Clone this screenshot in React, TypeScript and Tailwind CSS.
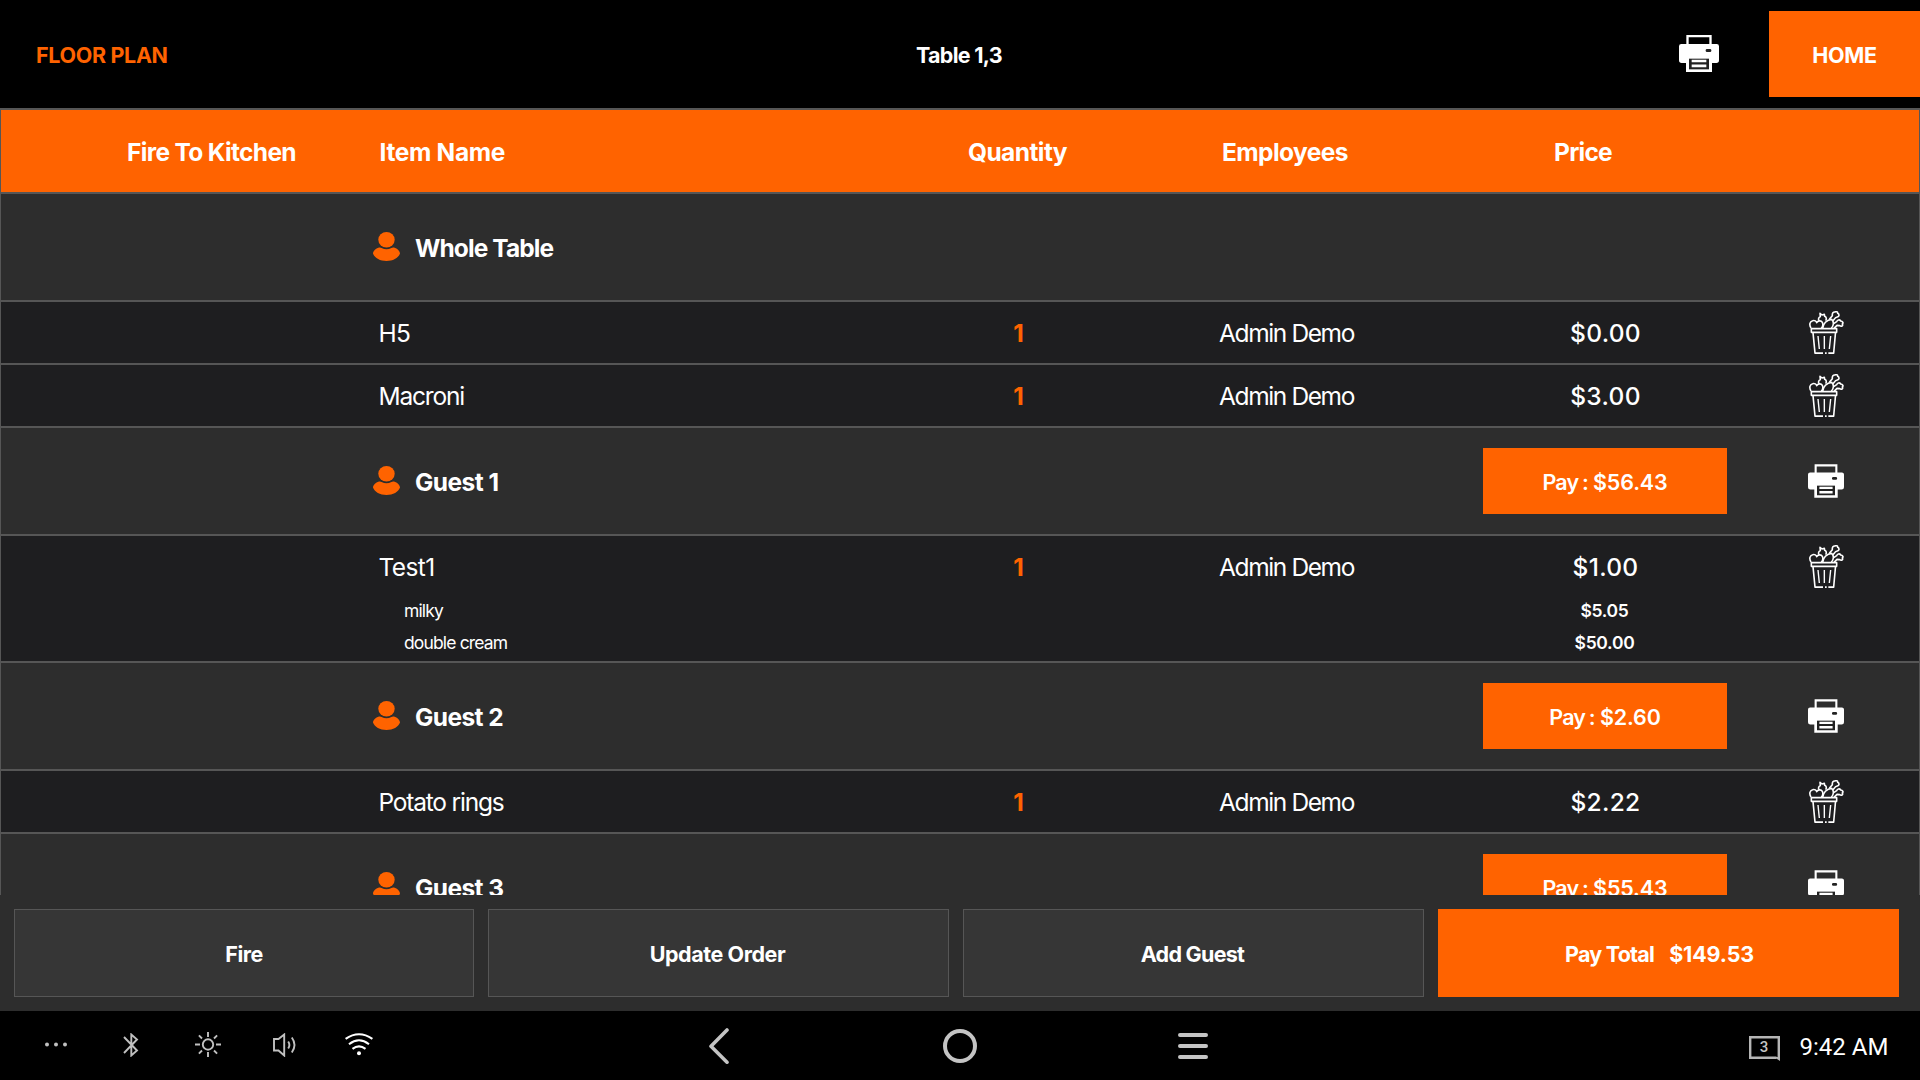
import type { ReactNode } from "react";

function Printer({ className }: { className: string }) {
  return (
    <svg viewBox="0 0 120 111" className={className} fill="none">
      <path d="M25.500 30V3.500H94.500V30" stroke="#fff" strokeWidth="7" />
      <path d="M7 27H113Q120 27 120 34V76Q120 84 112 84H99V111H21V84H8Q0 84 0 76V34Q0 27 7 27Z" fill="#fff" />
      <path d="M30 71H90V103H30Z" fill="#222" />
      <path d="M38 74.500H82V82H38ZM38 88.500H82V97H38Z" fill="#fff" />
      <rect x="80" y="42" width="17" height="9" rx="4" fill="#222" />
    </svg>
  );
}

function FoodBin() {
  return (
    <svg viewBox="0 0 105 129" className="h-[43px] w-[35px]" fill="none" stroke="#fff" strokeWidth="4.800" strokeLinejoin="round">
      <path d="M7 53H83V64H7Z" />
      <path d="M12 65L18 126.500H42M58 126.500H74L79.500 65M48 126.500H53" />
      <path d="M27 75L31 114M46 75V114M65 75L61 114" strokeWidth="4.200" />
      <path d="M6 51C0 42 2 31 11 29C17 27 22 31 23 35C26 29 36 27 40 34C43 40 41 47 37 52" />
      <path d="M30 29C27 24 29 18 34 17L33 7L39 12L46 10L47 16C53 19 53 24 50 29" />
      <path d="M41 52C42 38 53 26 68 25C76 32 74 44 67 52" />
      <path d="M61 25L70 14C69 7 73 2 78 3C81 0 87 3 86 7C92 10 91 17 85 18C81 19 79 20 77 23L72 29" />
      <path d="M74 38L83 32C85 26 92 25 95 30C101 31 104 36 100 39C103 44 97 48 92 44L84 43L75 52" />
    </svg>
  );
}

function Person() {
  return (
    <svg viewBox="0 0 27 29" className="mb-[2px] h-[29px] w-[27px] shrink-0" fill="#ff6300">
      <ellipse cx="13.500" cy="7.700" rx="8.200" ry="7.700" />
      <path d="M6 15.500Q7.500 15.200 8.600 15.900Q13.500 18.600 18.400 15.900Q19.500 15.200 21 15.500C24.500 16.300 27 19.500 27 21.500C25.500 26 20 29 13.500 29S1.500 26 0 21.500C0 19.500 2.500 16.300 6 15.500Z" />
    </svg>
  );
}

function Row({ group, tall, cells }: { group?: boolean; tall?: boolean; cells: ReactNode[] }) {
  const tone = group ? "h-[108px] items-center bg-[#2d2d2d]" : tall ? "h-[127px] items-start bg-[#1e1e20]" : "h-[63px] items-start bg-[#1e1e20]";
  return (
    <div className={`flex shrink-0 border-b-2 border-[#565656] ${tone}`}>
      <div className="w-[369px]" />
      <div className="w-[530px]">{cells[0]}</div>
      <div className="flex w-[236px] justify-center">{cells[1]}</div>
      <div className="flex w-[302px] justify-center">{cells[2]}</div>
      <div className="flex w-[334px] justify-center">{cells[3]}</div>
      <div className="flex w-[147px] justify-center pr-[39px]">{cells[4]}</div>
    </div>
  );
}

function Guest({ name, pay }: { name: ReactNode; pay?: string }) {
  return (
    <Row
      group
      cells={[
        <div className="flex items-center pl-[3px]">
          <Person />
          <span className="ml-[15px] pt-[2px] text-[24.500px] leading-[30px] font-bold">{name}</span>
        </div>,
        null,
        null,
        pay && (
          <button className="h-[66px] w-[244px] bg-[#ff6300] pt-[2px] text-[21.500px] font-semibold">
            <span className="mr-[3px] tracking-[-0.800px] [word-spacing:-1px]">Pay :</span>
            <span className="ml-[2px] tracking-[-0.150px]">{pay}</span>
          </button>
        ),
        pay && <Printer className="h-[34px] w-[36px]" />,
      ]}
    />
  );
}

function Item({ name, price, extras }: { name: ReactNode; price: string; extras?: [string, string][] }) {
  const line = "flex h-[61px] items-center pt-[2px] text-[24.500px]";
  return (
    <Row
      tall={!!extras}
      cells={[
        <div>
          <div className={`${line} pl-[8.500px]`}>{name}</div>
          {extras && (
            <div className="-mt-[2px] pl-[34px] text-[17.500px] leading-[32px] tracking-[-0.850px]">
              {extras.map(([n]) => (
                <div key={n}>{n}</div>
              ))}
            </div>
          )}
        </div>,
        <div className={`${line} pl-[1px] font-bold text-[#ff6300]`}>1</div>,
        <div className={`${line} pr-[1px] tracking-[-1.380px]`}>Admin Demo</div>,
        <div className="flex flex-col items-center">
          <div className={`${line} pl-[1px] font-medium tracking-[0.300px]`}>{price}</div>
          {extras && (
            <div className="-mt-[2px] pr-[1px] text-center text-[17.500px] leading-[32px] font-semibold tracking-[-0.300px]">
              {extras.map(([n, p]) => (
                <div key={n}>{p}</div>
              ))}
            </div>
          )}
        </div>,
        <div className="flex h-[61px] items-center">
          <FoodBin />
        </div>,
      ]}
    />
  );
}

function NavBar() {
  return (
    <nav className="flex h-[69px] shrink-0 items-center bg-black pl-[45px]">
      <svg className="mb-[1px] h-[24px] w-[22px]" viewBox="0 0 22 24" fill="#c0c0c0">
        <circle cx="2" cy="11.500" r="2" />
        <circle cx="11" cy="11.500" r="2" />
        <circle cx="20" cy="11.500" r="2" />
      </svg>
      <svg className="mb-[1px] ml-[56px] h-[24px] w-[16px]" viewBox="0 0 16 24" fill="none" stroke="#c0c0c0" strokeWidth="1.900">
        <path d="M1 4L14 17.500L8.300 22.500V1.500L14 6.500L1 20" />
      </svg>
      <svg className="mb-[1px] ml-[56px] h-[26px] w-[26px]" viewBox="0 0 26 26" fill="none" stroke="#c0c0c0" strokeWidth="1.900">
        <circle cx="13" cy="12.500" r="5.200" />
        <path d="M13 0V5M13 20V25M0 12.500H5M21 12.500H26M3.900 3.400L7 6.500M19 18.500L22.100 21.600M3.900 21.600L7 18.500M19 6.500L22.100 3.400" />
      </svg>
      <svg className="mb-[1px] ml-[52px] h-[24px] w-[24px]" viewBox="0 0 24 24" fill="none" stroke="#c0c0c0" strokeWidth="1.900">
        <path d="M1 6H5.500L11.200 1.500V22.500L5.500 17.500H1Z" />
        <path d="M15.200 8.500Q17.600 12 15.200 15.500M18.800 4.500Q24.200 12 18.800 19.500" />
      </svg>
      <svg className="mb-[1px] ml-[48px] h-[24px] w-[28px]" viewBox="0 0 28 24" fill="none" stroke="#fff" strokeWidth="2.100">
        <path d="M0.600 5.900Q14 -3.500 27.400 5.900M4 11.200Q14 3.300 24 11.200M7.500 15.900Q14 10.700 20.500 15.900" />
        <circle cx="14" cy="20.300" r="2" fill="#fff" stroke="none" />
      </svg>
      <svg className="ml-[336px] h-[36px] w-[20px]" viewBox="0 0 20 36" fill="none" stroke="#c4c4c4" strokeWidth="3.600" strokeLinecap="round" strokeLinejoin="round">
        <path d="M18 2L2 18.200L18 34.200" />
      </svg>
      <svg className="ml-[214px] h-[35px] w-[34px]" viewBox="0 0 34 35" fill="none" stroke="#c4c4c4" strokeWidth="4">
        <circle cx="17" cy="18" r="15" />
      </svg>
      <svg className="ml-[201px] h-[27px] w-[30px]" viewBox="0 0 30 27" fill="none" stroke="#c4c4c4" strokeWidth="4" strokeLinecap="round">
        <path d="M2 3H28M2 14H28M2 25H28" />
      </svg>
      <div className="relative mt-[6px] ml-[541px] h-[25px] w-[31px]">
        <svg className="h-[25px] w-[31px]" viewBox="0 0 31 25" fill="none">
          <path d="M29.800 22V1.200H1.200V21.700H27.500" stroke="#b5b5b5" strokeWidth="2.400" />
          <path d="M25 21H31V25Z" fill="#b5b5b5" />
        </svg>
        <span className="absolute inset-x-0 top-0 pr-[1px] text-center font-[Roboto] text-[15px] leading-[23px] font-medium text-[#c4c4c4]">3</span>
      </div>
      <span className="ml-[19.500px] pt-[2px] font-[Roboto] text-[24px] leading-[30px] whitespace-nowrap">9:42 AM</span>
    </nav>
  );
}

export default function App() {
  const action = "h-[88px] border border-[#565656] bg-[#363636] pt-[2px]";
  return (
    <div className="flex h-[1080px] w-[1920px] flex-col overflow-hidden bg-[#2d2d2d] font-[Inter,sans-serif] whitespace-pre text-white">
      <header className="flex h-[108px] shrink-0 items-center bg-black text-[21.500px] font-[650]">
        <div className="w-[840px] pt-[2px] pl-[36px] tracking-[-0.340px] text-[#ff6300]">FLOOR PLAN</div>
        <div className="w-[240px] pt-[2px] pr-[2px] text-center tracking-[-0.700px]">Table 1,3</div>
        <Printer className="mb-[2px] ml-[599px] h-[37px] w-[40px]" />
        <button className="ml-[50px] h-[86px] w-[151px] bg-[#ff6300] pt-[2px] tracking-[-0.330px]">HOME</button>
      </header>

      <main className="flex h-[787px] shrink-0 flex-col overflow-hidden border-x border-[#565656]">
        <div className="flex h-[86px] shrink-0 items-center border-y-2 border-[#565656] bg-[#ff6300] pt-[2px] text-[24.500px] font-[650]">
          <div className="w-[369px] pl-[52px] text-center tracking-[-0.660px]">Fire To Kitchen</div>
          <div className="w-[530px] pl-[9.500px] tracking-[-0.330px]">Item Name</div>
          <div className="w-[236px] pr-[1px] text-center tracking-[-0.570px]">Quantity</div>
          <div className="w-[302px] pr-[4px] text-center tracking-[-0.570px]">Employees</div>
          <div className="w-[334px] pr-[44px] text-center tracking-[-0.780px]">Price</div>
        </div>
        <Guest name={<span className="tracking-[-0.900px]">Whole Table</span>} />
        <Item name={<span className="tracking-[-0.700px]">H5</span>} price="$0.00" />
        <Item name={<span className="tracking-[-1.200px]">Macroni</span>} price="$3.00" />
        <Guest name={<span className="tracking-[-0.550px]">Guest 1</span>} pay="$56.43" />
        <Item
          name={<span className="tracking-[-0.600px]">Test1</span>}
          price="$1.00"
          extras={[
            ["milky", "$5.05"],
            ["double cream", "$50.00"],
          ]}
        />
        <Guest name={<span className="tracking-[-0.600px]">Guest 2</span>} pay="$2.60" />
        <Item name={<span className="tracking-[-1.200px]">Potato rings</span>} price="$2.22" />
        <Guest name={<span className="tracking-[-0.600px]">Guest 3</span>} pay="$55.43" />
      </main>

      <footer className="grid h-[116px] shrink-0 grid-cols-[460px_461px_461px_461px] gap-[14px] pt-[14px] pl-[14px] text-[21.500px] font-[650]">
        <button className={`${action} tracking-[-0.540px]`}>Fire</button>
        <button className={`${action} pr-[2px] tracking-[-0.430px]`}>Update Order</button>
        <button className={`${action} pr-[2px] tracking-[-0.720px]`}>Add Guest</button>
        <button className="flex h-[88px] items-center justify-center gap-[15px] bg-[#ff6300] pt-[2px] pr-[18px]">
          <span className="tracking-[-0.760px]">Pay Total</span>
          <span className="tracking-[-0.150px]">$149.53</span>
        </button>
      </footer>

      <NavBar />
    </div>
  );
}
